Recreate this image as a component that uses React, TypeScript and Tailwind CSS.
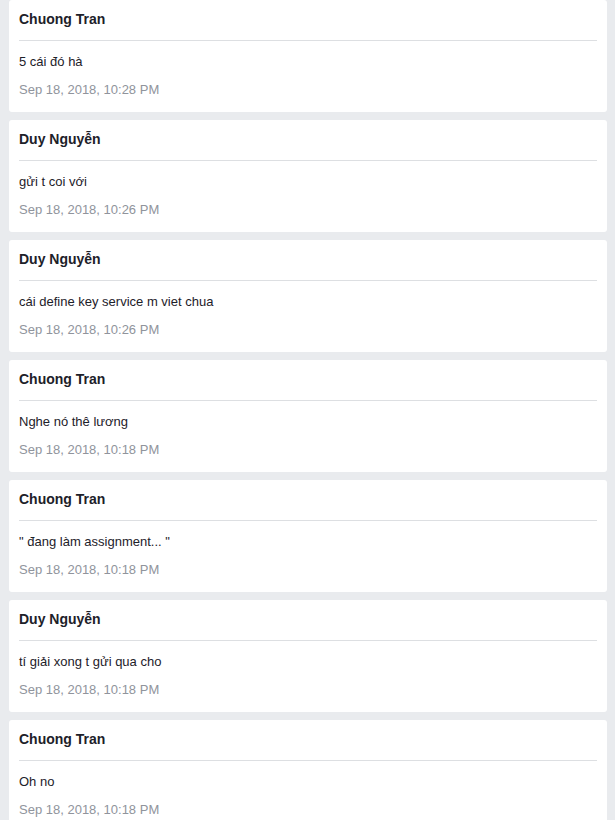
import React from "react";

const items = [
  { name: "Chuong Tran", msg: "5 cái đó hà", date: "Sep 18, 2018, 10:28 PM" },
  { name: "Duy Nguyễn", msg: "gửi t coi với", date: "Sep 18, 2018, 10:26 PM" },
  { name: "Duy Nguyễn", msg: "cái define key service m viet chua", date: "Sep 18, 2018, 10:26 PM" },
  { name: "Chuong Tran", msg: "Nghe nó thê lương", date: "Sep 18, 2018, 10:18 PM" },
  { name: "Chuong Tran", msg: "\" đang làm assignment... \"", date: "Sep 18, 2018, 10:18 PM" },
  { name: "Duy Nguyễn", msg: "tí giải xong t gửi qua cho", date: "Sep 18, 2018, 10:18 PM" },
  { name: "Chuong Tran", msg: "Oh no", date: "Sep 18, 2018, 10:18 PM" },
];

export default function App() {
  return (
    <div
      className="min-h-[820px] bg-[#e9ebee] pl-[9px] pr-[8px] flex flex-col gap-[8px]"
      style={{ fontFamily: '"Liberation Sans", Arial, sans-serif' }}
    >
      {items.map((it, i) => (
        <div key={i} className="bg-white rounded-[3px] px-[10px] pt-[10px] pb-[12px] flex flex-col">
          <div className="h-[18px] leading-[18px] text-[14px] font-bold text-[#1d2129]">{it.name}</div>
          <div className="mt-[12px] h-px bg-[#dddfe2]" />
          <div className="mt-[11px] h-[20px] leading-[20px] text-[13px] text-[#1d2129]">{it.msg}</div>
          <div className="mt-[8px] h-[20px] leading-[20px] text-[13px] text-[#90949c]">{it.date}</div>
        </div>
      ))}
    </div>
  );
}
